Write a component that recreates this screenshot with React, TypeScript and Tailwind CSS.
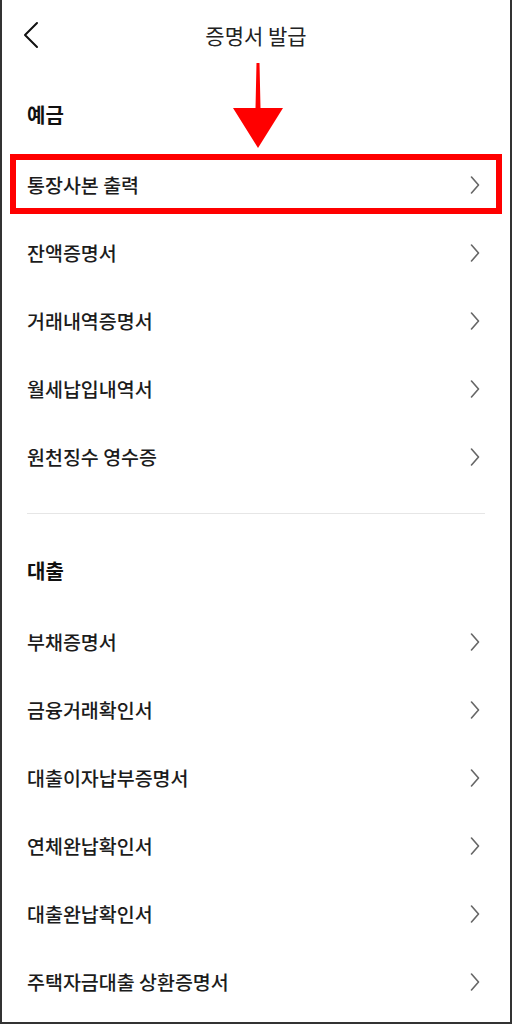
const deposits = ["통장사본 출력", "잔액증명서", "거래내역증명서", "월세납입내역서", "원천징수 영수증"];
const loans = [
  "부채증명서",
  "금융거래확인서",
  "대출이자납부증명서",
  "연체완납확인서",
  "대출완납확인서",
  "주택자금대출 상환증명서",
];

const Chevron = () => (
  <svg width="10" height="18" viewBox="0 0 10 18" fill="none">
    <path d="M1.5 1 L8.5 9 L1.5 17" stroke="#666" strokeWidth="1.6" strokeLinecap="round" strokeLinejoin="round" />
  </svg>
);

const Row = ({ label, highlight }: { label: string; highlight?: boolean }) => (
  <div className="relative flex h-[68px] items-center justify-between pl-[25px] pr-[30px]">
    <span className="text-[19.5px] font-medium leading-none text-[#1c1c1c]">{label}</span>
    <Chevron />
    {highlight && (
      <div className="absolute left-[8px] right-[8px] top-[3px] h-[60px] border-[6px] border-[#ff0000]" />
    )}
  </div>
);

export default function App() {
  return (
    <div
      className="relative h-[1024px] w-[512px] overflow-hidden border-x-2 border-b-2 border-[#333] bg-white"
      style={{ fontFamily: '"Noto Sans CJK KR", "Noto Sans", sans-serif' }}
    >
      <header className="relative flex h-[70px] items-center justify-center">
        <svg className="absolute left-[20px] top-[21px]" width="18" height="28" viewBox="0 0 18 28" fill="none">
          <path d="M15 2 L3 14 L15 26" stroke="#111" strokeWidth="2" strokeLinecap="round" strokeLinejoin="round" />
        </svg>
        <h1 className="text-[21px] font-normal leading-none text-[#222]">증명서 발급</h1>
      </header>

      <section>
        <h2 className="flex h-[81px] items-center pt-[9px] pl-[25px] text-[20px] font-bold leading-none text-[#111]">
          예금
        </h2>
        {deposits.map((d, i) => (
          <Row key={d} label={d} highlight={i === 0} />
        ))}
      </section>

      <div className="mx-[25px] mt-[22px] h-[1px] bg-[#e6e6e6]" />

      <section>
        <h2 className="flex h-[94px] items-center pt-[20px] pl-[25px] text-[20px] font-bold leading-none text-[#111]">
          대출
        </h2>
        {loans.map((l) => (
          <Row key={l} label={l} />
        ))}
      </section>

      <svg className="absolute left-[229px] top-[62px]" width="54" height="88" viewBox="0 0 54 88">
        <path d="M25.5 1 L28.5 1 L29.5 46 L52 46 L27 86 L2 46 L24.5 46 Z" fill="#ff0000" />
      </svg>
    </div>
  );
}
